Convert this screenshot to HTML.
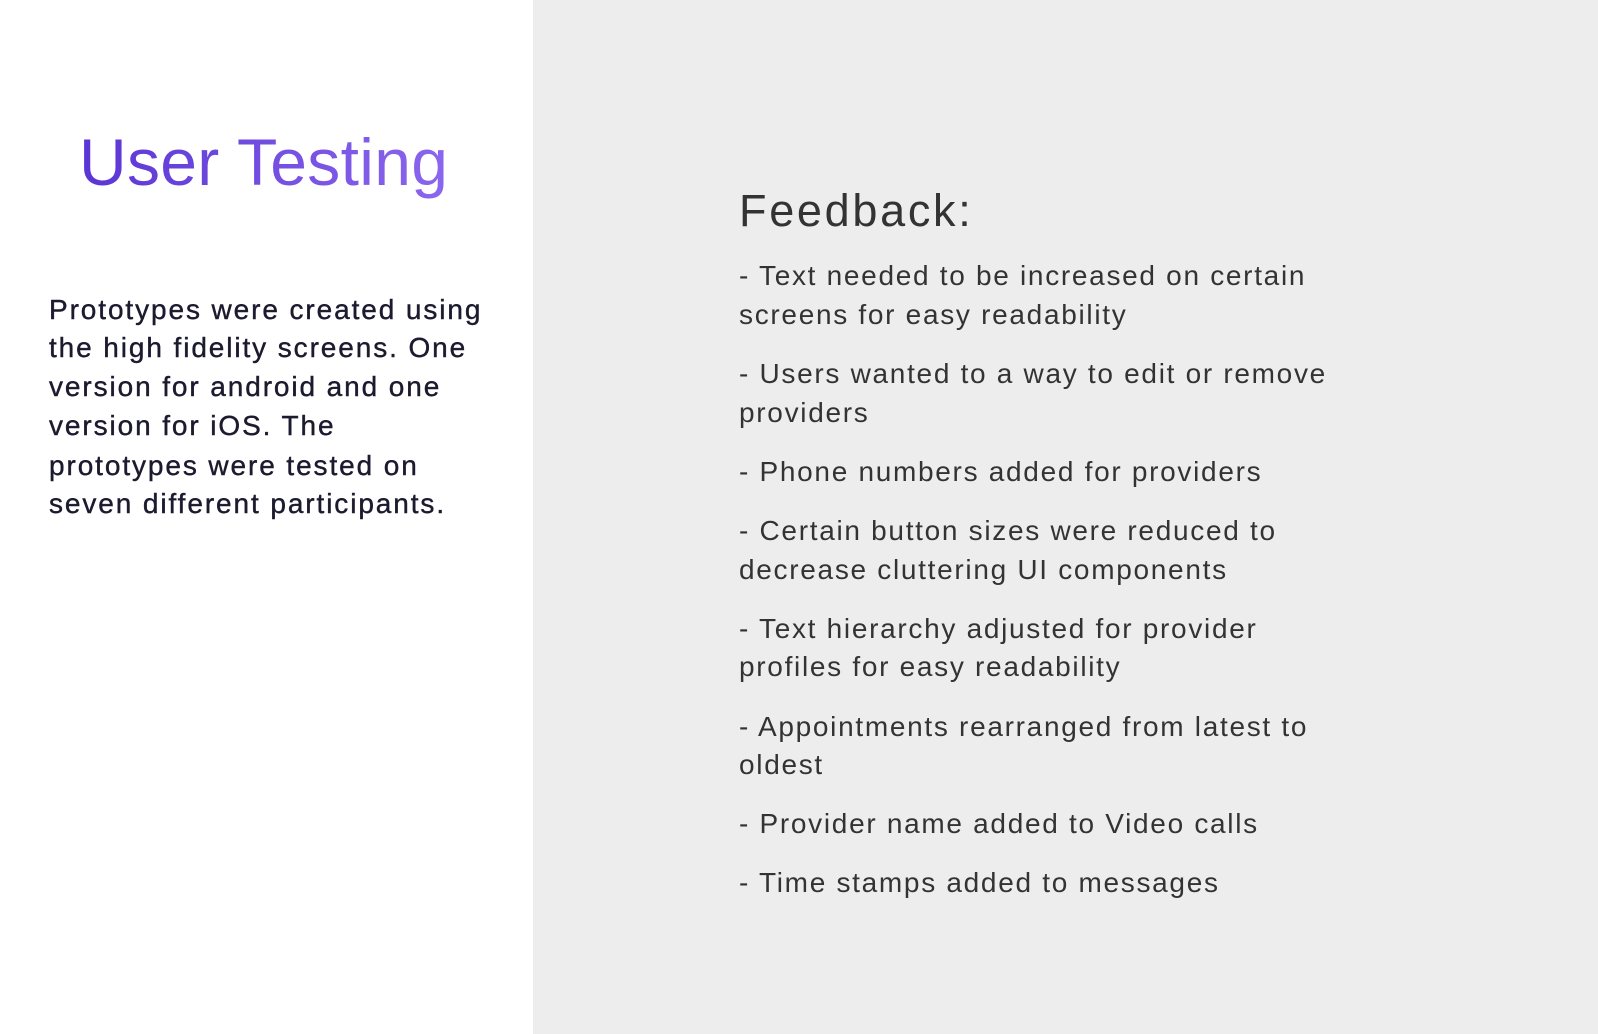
<!DOCTYPE html>
<html><head><meta charset="utf-8"><style>
html,body{margin:0;padding:0}
body{width:1598px;height:1034px;position:relative;overflow:hidden;background:#fff;font-family:"Liberation Sans",sans-serif}
.right{position:absolute;left:533px;top:0;width:1065px;height:1034px;background:#ededed}
.t{position:absolute;white-space:nowrap;line-height:40px;height:40px}
.l{left:49px;font-size:28px;color:#1c1a2e;letter-spacing:1.9px;-webkit-text-stroke:0.4px #1c1a2e}
.r{left:739px;font-size:28px;color:#333;letter-spacing:1.7px}
</style></head><body>
<div class="right"></div>
<div class="t" style="left:79px;top:122px;height:80px;line-height:80px;font-size:66px;letter-spacing:0.3px;background:linear-gradient(90deg,#5a35d4,#8b66ee);-webkit-background-clip:text;background-clip:text;color:transparent">User Testing</div>
<div class="t l" style="top:290px">Prototypes were created using</div>
<div class="t l" style="top:328px">the high fidelity screens. One</div>
<div class="t l" style="top:367px">version for android and one</div>
<div class="t l" style="top:406px">version for iOS. The</div>
<div class="t l" style="top:446px">prototypes were tested on</div>
<div class="t l" style="top:484px">seven different participants.</div>
<div class="t" style="left:739px;top:186px;height:50px;line-height:50px;font-size:45px;color:#333;letter-spacing:2.7px">Feedback:</div>
<div class="t r" style="top:256px">- Text needed to be increased on certain</div>
<div class="t r" style="top:295px">screens for easy readability</div>
<div class="t r" style="top:354px">- Users wanted to a way to edit or remove</div>
<div class="t r" style="top:393px">providers</div>
<div class="t r" style="top:452px">- Phone numbers added for providers</div>
<div class="t r" style="top:511px">- Certain button sizes were reduced to</div>
<div class="t r" style="top:550px">decrease cluttering UI components</div>
<div class="t r" style="top:609px">- Text hierarchy adjusted for provider</div>
<div class="t r" style="top:647px">profiles for easy readability</div>
<div class="t r" style="top:707px">- Appointments rearranged from latest to</div>
<div class="t r" style="top:745px">oldest</div>
<div class="t r" style="top:804px">- Provider name added to Video calls</div>
<div class="t r" style="top:863px">- Time stamps added to messages</div>
</body></html>
